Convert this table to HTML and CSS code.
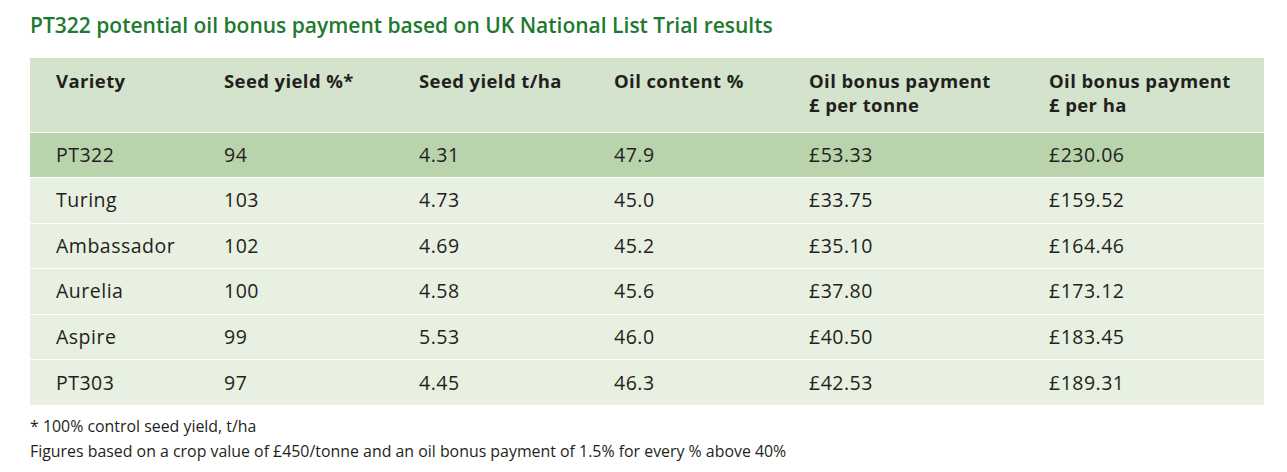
FILE: index.html
```html
<!DOCTYPE html>
<html lang="en">
<head>
<meta charset="utf-8">
<title>PT322 oil bonus</title>
<link rel="stylesheet" href="styles.css">
</head>
<body>
<main class="page">
  <h1 class="title">PT322 potential oil bonus payment based on UK National List Trial results</h1>
  <table class="data">
    <colgroup>
      <col class="c1"><col class="c2"><col class="c3"><col class="c4"><col class="c5"><col class="c6">
    </colgroup>
    <thead>
      <tr>
        <th>Variety</th>
        <th>Seed yield %*</th>
        <th>Seed yield t/ha</th>
        <th>Oil content %</th>
        <th>Oil bonus payment<br>£ per tonne</th>
        <th>Oil bonus payment<br>£ per ha</th>
      </tr>
    </thead>
    <tbody>
      <tr class="hl"><td>PT322</td><td>94</td><td>4.31</td><td>47.9</td><td>£53.33</td><td>£230.06</td></tr>
      <tr><td>Turing</td><td>103</td><td>4.73</td><td>45.0</td><td>£33.75</td><td>£159.52</td></tr>
      <tr><td>Ambassador</td><td>102</td><td>4.69</td><td>45.2</td><td>£35.10</td><td>£164.46</td></tr>
      <tr><td>Aurelia</td><td>100</td><td>4.58</td><td>45.6</td><td>£37.80</td><td>£173.12</td></tr>
      <tr><td>Aspire</td><td>99</td><td>5.53</td><td>46.0</td><td>£40.50</td><td>£183.45</td></tr>
      <tr><td>PT303</td><td>97</td><td>4.45</td><td>46.3</td><td>£42.53</td><td>£189.31</td></tr>
    </tbody>
  </table>
  <p class="note">* 100% control seed yield, t/ha</p>
  <p class="note">Figures based on a crop value of £450/tonne and an oil bonus payment of 1.5% for every % above 40%</p>
</main>
</body>
</html>
```
FILE: styles.css
```css
html, body {
  margin: 0;
  padding: 0;
  background: #ffffff;
}
body {
  font-family: "Open Sans", "Liberation Sans", sans-serif;
  color: #231f20;
}
.page {
  padding: 11px 23px 0 30px;
}
.title {
  margin: 0;
  font-size: 21px;
  line-height: 29px;
  font-weight: 600;
  color: #1d7a30;
}
.data {
  margin-top: 18px;
  width: 1234px;
  border-collapse: collapse;
  table-layout: fixed;
}
.c1 { width: 168px; }
.c2, .c3, .c4 { width: 195px; }
.c5 { width: 240px; }
.c6 { width: 241px; }
.data th,
.data td {
  text-align: left;
  padding: 0 0 0 26px;
  vertical-align: middle;
}
.data thead tr {
  background: #d4e4cc;
  height: 74px;
}
.data th {
  vertical-align: top;
  padding-top: 11px;
  font-size: 18.5px;
  line-height: 24px;
  font-weight: 700;
  letter-spacing: 0.4px;
}
.data tbody tr {
  background: #e8f0e2;
  height: 45.5px;
  border-top: 1px solid #ffffff;
}
.data tbody tr.hl {
  background: #b9d3ad;
}
.data td {
  font-size: 19.5px;
  line-height: 24px;
  letter-spacing: 0.5px;
}
.note {
  margin: 0;
  font-size: 15.9px;
  line-height: 25px;
}
.data + .note {
  margin-top: 9px;
}
```
